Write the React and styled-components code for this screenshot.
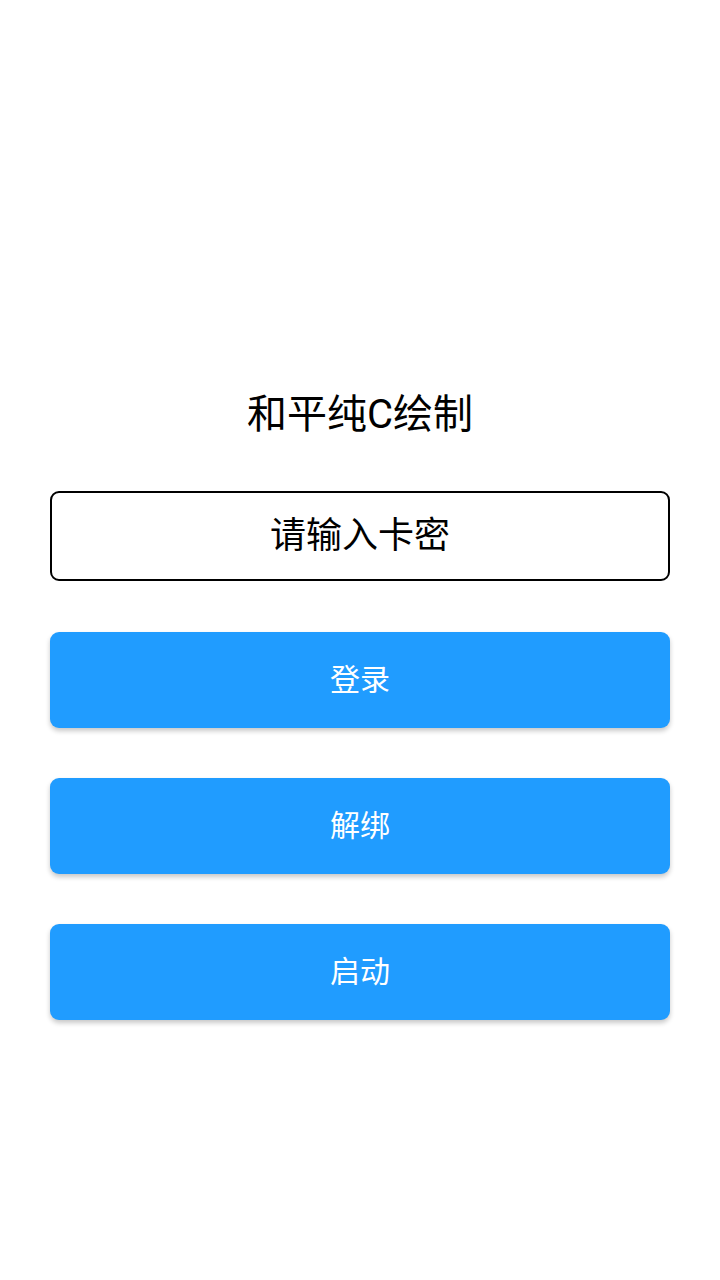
import React from "react";
import styled, { createGlobalStyle } from "styled-components";

const GlobalStyle = createGlobalStyle`
  html, body {
    margin: 0;
    padding: 0;
    background: #ffffff;
  }
  body {
    font-family: Roboto, "Noto Sans CJK SC", "Noto Sans", sans-serif;
  }
`;

const Page = styled.div`
  width: 720px;
  height: 1280px;
  box-sizing: border-box;
  padding: 391px 50px 0;
  display: flex;
  flex-direction: column;
  align-items: stretch;
`;

const Title = styled.h1`
  margin: 0 0 52px;
  font-size: 40px;
  line-height: 48px;
  font-weight: 400;
  color: #000;
  text-align: center;
`;

const KeyInput = styled.input`
  box-sizing: border-box;
  height: 90px;
  width: 100%;
  border: 2px solid #000;
  border-radius: 9px;
  background: #fff;
  font-family: inherit;
  font-size: 36px;
  text-align: center;
  color: #000;
  outline: none;
  margin-bottom: 51px;

  &::placeholder {
    color: #000;
  }
`;

const ActionButton = styled.button`
  box-sizing: border-box;
  height: 96px;
  width: 100%;
  padding: 0 0 6px;
  border: none;
  border-radius: 9px;
  background: #209cff;
  color: #fff;
  font-family: inherit;
  font-size: 30px;
  box-shadow: 0 3px 5px rgba(0, 0, 0, 0.22);
  margin-bottom: 50px;
  cursor: pointer;
`;

export default function App() {
  return (
    <>
      <GlobalStyle />
      <Page>
        <Title>和平纯C绘制</Title>
        <KeyInput placeholder="请输入卡密" />
        <ActionButton>登录</ActionButton>
        <ActionButton>解绑</ActionButton>
        <ActionButton>启动</ActionButton>
      </Page>
    </>
  );
}
